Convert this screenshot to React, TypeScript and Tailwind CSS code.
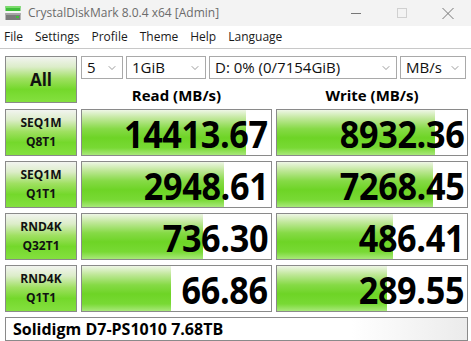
import { ChevronDown } from 'lucide-react';

const barBg =
  'bg-[linear-gradient(to_bottom,#eef6e6_0%,#c2e89c_18%,#86da46_42%,#6ed426_62%,#78d934_84%,#a8e87a_100%)]';
const btnBg =
  'bg-[linear-gradient(to_bottom,#f2f4f0_0%,#dcedc9_22%,#9fe061_48%,#74d82b_72%,#84e03f_100%)]';

const rows = [
  { l1: 'SEQ1M', l2: 'Q8T1', read: '14413.67', rp: 87, write: '8932.36', wp: 83 },
  { l1: 'SEQ1M', l2: 'Q1T1', read: '2948.61', rp: 75, write: '7268.45', wp: 82 },
  { l1: 'RND4K', l2: 'Q32T1', read: '736.30', rp: 64, write: '486.41', wp: 61 },
  { l1: 'RND4K', l2: 'Q1T1', read: '66.86', rp: 47, write: '289.55', wp: 58 },
];

function Select({ text, w }: { text: string; w: string }) {
  return (
    <div className={`${w} h-[23px] bg-white border border-[#a9a9a9] flex items-center justify-between pl-[5px] pr-[4px]`}>
      <span className="text-[15px] leading-none text-[#111]">{text}</span>
      <ChevronDown size={12} strokeWidth={1.3} className="text-[#666]" />
    </div>
  );
}

function Meter({ value, pct }: { value: string; pct: number }) {
  return (
    <div className="relative h-[47px] border border-[#8a8a8a] bg-white">
      <div className={`absolute left-0 top-0 bottom-0 ${barBg}`} style={{ width: `${pct}%` }} />
      <div className="relative h-full flex items-center justify-end pr-[3px]">
        <span className="text-[38px] font-bold tracking-[-0.4px] leading-[44px] text-black scale-x-[0.9] origin-right">
          {value}
        </span>
      </div>
    </div>
  );
}

function Label({ l1, l2 }: { l1: string; l2: string }) {
  return (
    <div className={`h-[47px] border border-[#8a8a8a] ${btnBg} flex flex-col items-center justify-center gap-[7px]`}>
      <span className="text-[12px] font-bold leading-none text-[#111]">{l1}</span>
      <span className="text-[12px] font-bold leading-none text-[#111]">{l2}</span>
    </div>
  );
}

export default function App() {
  return (
    <div className="w-[471px] h-[341px] bg-white overflow-hidden font-['Open_Sans',sans-serif] text-black">
      {/* title bar */}
      <div className="h-[26px] bg-[#f3f3f3] flex items-center">
        <svg width="16" height="16" viewBox="0 0 16 16" className="ml-[5px]">
          <rect x="0.5" y="1" width="15" height="5" fill="#3fbf3a" />
          <rect x="0.5" y="1" width="15" height="2" fill="#7ddc6e" />
          <rect x="0.5" y="8" width="15" height="7" fill="#7b7b7b" />
          <rect x="0.5" y="8" width="15" height="2" fill="#a5a5a5" />
          <rect x="11" y="11" width="3" height="2" fill="#3fbf3a" />
        </svg>
        <span className="ml-[7px] text-[12px] text-[#6b6b6b]">CrystalDiskMark 8.0.4 x64 [Admin]</span>
        <div className="ml-auto flex items-center">
          <svg width="46" height="26" viewBox="0 0 46 26">
            <line x1="18" y1="13.5" x2="28" y2="13.5" stroke="#777" strokeWidth="1" />
          </svg>
          <svg width="46" height="26" viewBox="0 0 46 26">
            <rect x="18.5" y="8.5" width="9" height="9" fill="none" stroke="#d0d0d0" strokeWidth="1" />
          </svg>
          <svg width="46" height="26" viewBox="0 0 46 26">
            <path d="M17.5 8 L28.5 19 M28.5 8 L17.5 19" stroke="#777" strokeWidth="1" />
          </svg>
        </div>
      </div>

      {/* menu bar */}
      <div className="h-[23px] bg-white border-b border-[#c8c8c8] flex items-center pl-[4px] gap-[12px] text-[12px] text-[#1a1a1a]">
        <span>File</span>
        <span>Settings</span>
        <span>Profile</span>
        <span>Theme</span>
        <span>Help</span>
        <span>Language</span>
      </div>

      {/* main */}
      <div className="pt-[7px] px-[5px]">
        <div className="grid grid-cols-[72px_191px_192px] gap-x-[4px] gap-y-[5px]">
          <div className={`h-[47px] border border-[#8a8a8a] ${btnBg} flex items-center justify-center`}>
            <span className="text-[17px] font-bold text-[#111]">All</span>
          </div>
          <div className="col-span-2 flex flex-col">
            <div className="flex gap-[3px]">
              <Select text="5" w="w-[42px]" />
              <Select text="1GiB" w="w-[80px]" />
              <Select text="D: 0% (0/7154GiB)" w="w-[188px]" />
              <Select text="MB/s" w="w-[66px]" />
            </div>
            <div className="grid grid-cols-[191px_192px] gap-x-[4px] mt-[7px]">
              <div className="text-center text-[15px] font-bold leading-[18px]">Read (MB/s)</div>
              <div className="text-center text-[15px] font-bold leading-[18px]">Write (MB/s)</div>
            </div>
          </div>
          {rows.map((r) => (
            <>
              <Label key={r.read + 'l'} l1={r.l1} l2={r.l2} />
              <Meter key={r.read} value={r.read} pct={r.rp} />
              <Meter key={r.write} value={r.write} pct={r.wp} />
            </>
          ))}
        </div>
        <div className="mt-[5px] h-[24px] w-[463px] border border-[#8a8a8a] bg-[linear-gradient(to_right,#ffffff_0%,#ffffff_75%,#ebebeb_100%)] flex items-center pl-[7px]">
          <span className="text-[16px] font-bold leading-none">Solidigm D7-PS1010 7.68TB</span>
        </div>
      </div>
    </div>
  );
}
